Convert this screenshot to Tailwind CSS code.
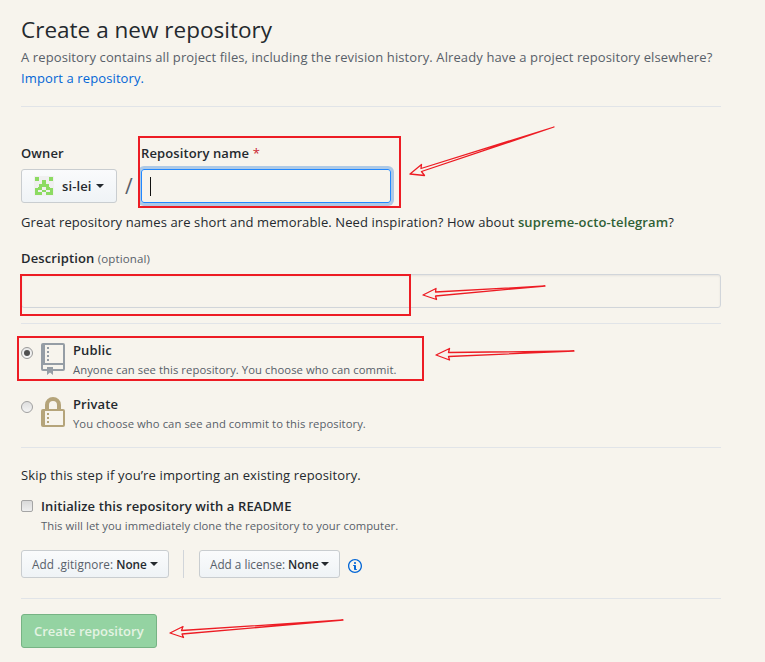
<!DOCTYPE html>
<html lang="en">
<head>
<meta charset="utf-8">
<title>Create a new repository</title>
<script src="https://cdn.jsdelivr.net/npm/@tailwindcss/browser@4"></script>
</head>
<body class="relative h-[662px] w-[765px] overflow-hidden bg-[#f7f4ed] font-['Open_Sans','Noto_Sans',sans-serif] text-[13px] leading-[21px] tracking-[0.11px] text-[#24292e]">
<main class="ml-[21px] flex w-[700px] flex-col whitespace-nowrap">
  <header class="h-[107px] border-b border-[#e1e4e8] pt-[12px]">
    <h1 class="h-[35px] text-[22.5px] leading-[36px] tracking-[0.02px]"><span>Create a new repository</span></h1>
    <p class="text-[#586069]"><span>A repository contains all project files, including the revision history. Already have a project repository elsewhere?</span><br><a class="text-[#0366d6]">Import a repository.</a></p>
  </header>

  <section class="flex h-[96px] pt-[36px]">
    <div class="w-[96px]">
      <label class="block h-[26px] font-semibold"><span>Owner</span></label>
      <button class="flex h-[34px] w-[96px] items-center rounded-[3px] border border-[#c9cdd0] bg-linear-to-b from-[#fafbfc] to-[#eff3f6] pl-[12px] font-semibold">
        <svg class="mr-[8px] size-5" viewBox="0 0 20 20" shape-rendering="crispEdges"><path fill="#f0f0f0" d="M0 0h20v20H0z"/><path fill="#8cdb62" d="M1 1h4v4H1zM15 1h4v4h-4zM8 4h4v4H8zM5 8h10v3H5zM4 11h4v3H4zM12 11h4v3h-4zM1 12h3v7H1zM16 12h3v7h-3zM4 16h4v3H4zM12 16h4v3h-4zM8 14h4v2H8z"/></svg>
        <span>si-lei</span>
        <i class="ml-[4px] border-x-4 border-t-4 border-x-transparent border-t-[#24292e]"></i>
      </button>
    </div>
    <div class="w-[24px] pt-[26px] text-center text-[21px] leading-[34px] text-[#586069]">/</div>
    <div>
      <label class="block h-[26px] font-semibold"><span>Repository name</span> <b class="font-normal text-[#cb2431]">*</b></label>
      <div class="flex h-[34px] w-[250px] items-center rounded-[3px] border border-[#2188ff] pl-[8px] shadow-[0_0_0_3px_rgba(3,102,214,0.3)]"><i class="h-[19px] w-px bg-[#111]"></i></div>
    </div>
  </section>
  <p class="h-[36px] pt-[9px]"><span>Great repository names are short and memorable. Need inspiration? How about </span><b class="font-semibold text-[#2f5f35]">supreme-octo-telegram</b>?</p>

  <section class="h-[85px] border-b border-[#e1e4e8] pt-[9px]">
    <label class="block h-[26px] font-semibold"><span>Description</span> <small class="text-[11.5px] font-medium text-[#586069]">(optional)</small></label>
    <div class="h-[34px] rounded-[3px] border border-[#d1d5da] shadow-[inset_0_1px_2px_rgba(27,31,35,0.075)]"></div>
  </section>

  <section class="h-[124px] border-b border-[#e1e4e8] pt-[16px]">
    <div class="flex h-[54px]">
      <i class="mt-[7px] flex size-3 items-center justify-center rounded-full border border-[#999] bg-linear-to-b from-[#e8e8e8] to-[#f8f8f8]"><i class="size-[6px] rounded-full bg-[#505050]"></i></i>
      <svg class="ml-[8px] mt-[3px] h-8 w-6" viewBox="0 0 24 32" fill="#959da5"><path fill-rule="evenodd" d="M2 0h20q2 0 2 2v24q0 2-2 2H12v4l-3-2.600-3 2.600v-4H2q-2 0-2-2V2q0-2 2-2zM4 2v18h18V2zM2 22v4h4v-2h6v2h10v-4z"/><path d="M6 4h2v2H6zM6 8h2v2H6zM6 12h2v2H6zM6 16h2v2H6z"/></svg>
      <div class="ml-[8px]"><b class="block h-[20px] font-semibold"><span>Public</span></b><p class="text-[11.25px] leading-[20px] tracking-[0.07px] text-[#586069]"><span>Anyone can see this repository. You choose who can commit.</span></p></div>
    </div>
    <div class="flex">
      <i class="mt-[7px] size-3 rounded-full border border-[#a0a0a0] bg-linear-to-b from-[#dedede] to-[#f4f4f4]"></i>
      <svg class="ml-[8px] mt-[3px] h-[30px] w-6" viewBox="0 0 24 30" fill="#b5a47a"><path fill-rule="evenodd" d="M4 12V8a8 8 0 0 1 16 0v4h2q2 0 2 2v14q0 2-2 2H2q-2 0-2-2V14q0-2 2-2zM8 12h8V8a4 4 0 0 0-8 0zM4 14v14h18V14z"/><path d="M6 16h2v2H6zM6 20h2v2H6zM6 24h2v2H6z"/></svg>
      <div class="ml-[8px]"><b class="block h-[20px] font-semibold"><span>Private</span></b><p class="text-[11.25px] leading-[20px] tracking-[0.07px] text-[#586069]"><span>You choose who can see and commit to this repository.</span></p></div>
    </div>
  </section>

  <section class="h-[151px] border-b border-[#e1e4e8] pt-[17px]">
    <p class="h-[31px] tracking-[0.14px]"><span>Skip this step if you’re importing an existing repository.</span></p>
    <div class="flex h-[55px]">
      <i class="mt-[4px] size-3 rounded-[2px] border border-[#a5a5a5] bg-linear-to-b from-[#d9d9d9] to-[#efefef]"></i>
      <div class="ml-[8px]"><b class="block h-[20px] font-semibold"><span>Initialize this repository with a README</span></b><p class="text-[11.25px] leading-[20px] tracking-[0.06px] text-[#586069]"><span>This will let you immediately clone the repository to your computer.</span></p></div>
    </div>
    <div class="-mt-px flex h-[28px] text-[11.75px]">
      <button class="flex h-[28px] w-[148px] items-center rounded-[3px] border border-[#c9cdd0] bg-linear-to-b from-[#fafbfc] to-[#eff3f6] pl-[10px]"><span class="text-[#586069]">Add .gitignore:</span><b class="ml-[3px] font-semibold tracking-normal">None</b><i class="ml-[3px] border-x-4 border-t-4 border-x-transparent border-t-[#24292e]"></i></button>
      <i class="ml-[14px] mr-[15px] w-px bg-[#d1d5da]"></i>
      <button class="flex h-[28px] w-[141px] items-center rounded-[3px] border border-[#c9cdd0] bg-linear-to-b from-[#fafbfc] to-[#eff3f6] pl-[10px]"><span class="tracking-normal text-[#586069]">Add a license:</span><b class="ml-[3px] font-semibold tracking-normal">None</b><i class="ml-[2px] border-x-4 border-t-4 border-x-transparent border-t-[#24292e]"></i></button>
      <svg class="ml-[8px] mt-[8px] h-4 w-[14px]" viewBox="0 0 14 16" fill="#0366d6"><path fill-rule="evenodd" d="M6.300 5.690a.942.942 0 0 1-.28-.7c0-.28.090-.520.280-.7.190-.180.420-.280.700-.280.280 0 .520.090.700.280.180.190.280.420.280.700 0 .280-.090.520-.280.700a1 1 0 0 1-.7.300c-.280 0-.520-.110-.7-.3zM8 7.990c-.020-.250-.110-.480-.310-.690-.200-.190-.420-.300-.690-.310H6c-.270.020-.480.130-.690.310-.200.200-.300.440-.310.690h1v3c.020.270.110.500.310.690.200.200.420.310.690.310h1c.270 0 .480-.110.690-.310.200-.190.300-.420.310-.690H8V7.980v.010zM7 2.300c-3.140 0-5.700 2.540-5.700 5.680 0 3.140 2.560 5.700 5.700 5.700s5.700-2.550 5.700-5.700c0-3.150-2.560-5.690-5.700-5.690v.010zM7 .980c3.860 0 7 3.140 7 7s-3.140 7-7 7-7-3.120-7-7 3.140-7 7-7z"/></svg>
    </div>
  </section>
  <button class="mt-[15px] flex h-[34px] w-[136px] items-center rounded-[3px] border border-[#77b384] bg-[#94d3a2] pl-[12px] font-semibold tracking-normal text-[#e4f3e3]"><span>Create repository</span></button>
</main>

<div class="absolute left-[138px] top-[136px] h-[72px] w-[263px] border-2 border-[#ed1c24]"></div>
<div class="absolute left-[20px] top-[274px] h-[42px] w-[391px] border-2 border-[#ed1c24]"></div>
<div class="absolute left-[17px] top-[336px] h-[45px] w-[407px] border-2 border-[#ed1c24]"></div>
<svg class="absolute left-0 top-0" width="765" height="662" fill="none" stroke="#ed1c24" stroke-width="1.300" stroke-linejoin="round">
  <path d="M554 127L421 168.500L421.500 164.500L410 174L424.500 175.500L421.500 171.500Z"/>
  <path d="M545 286L435.500 292L436 288.500L423 295L436.500 299.500L435.500 296Z"/>
  <path d="M574 351L448.500 352.500L449.500 348.500L436 355L449.500 360L448.500 356.500Z"/>
  <path d="M343 620L181.500 630.500L183 626.500L170 633L183.500 637.500L182 634Z"/>
</svg>
</body>
</html>
